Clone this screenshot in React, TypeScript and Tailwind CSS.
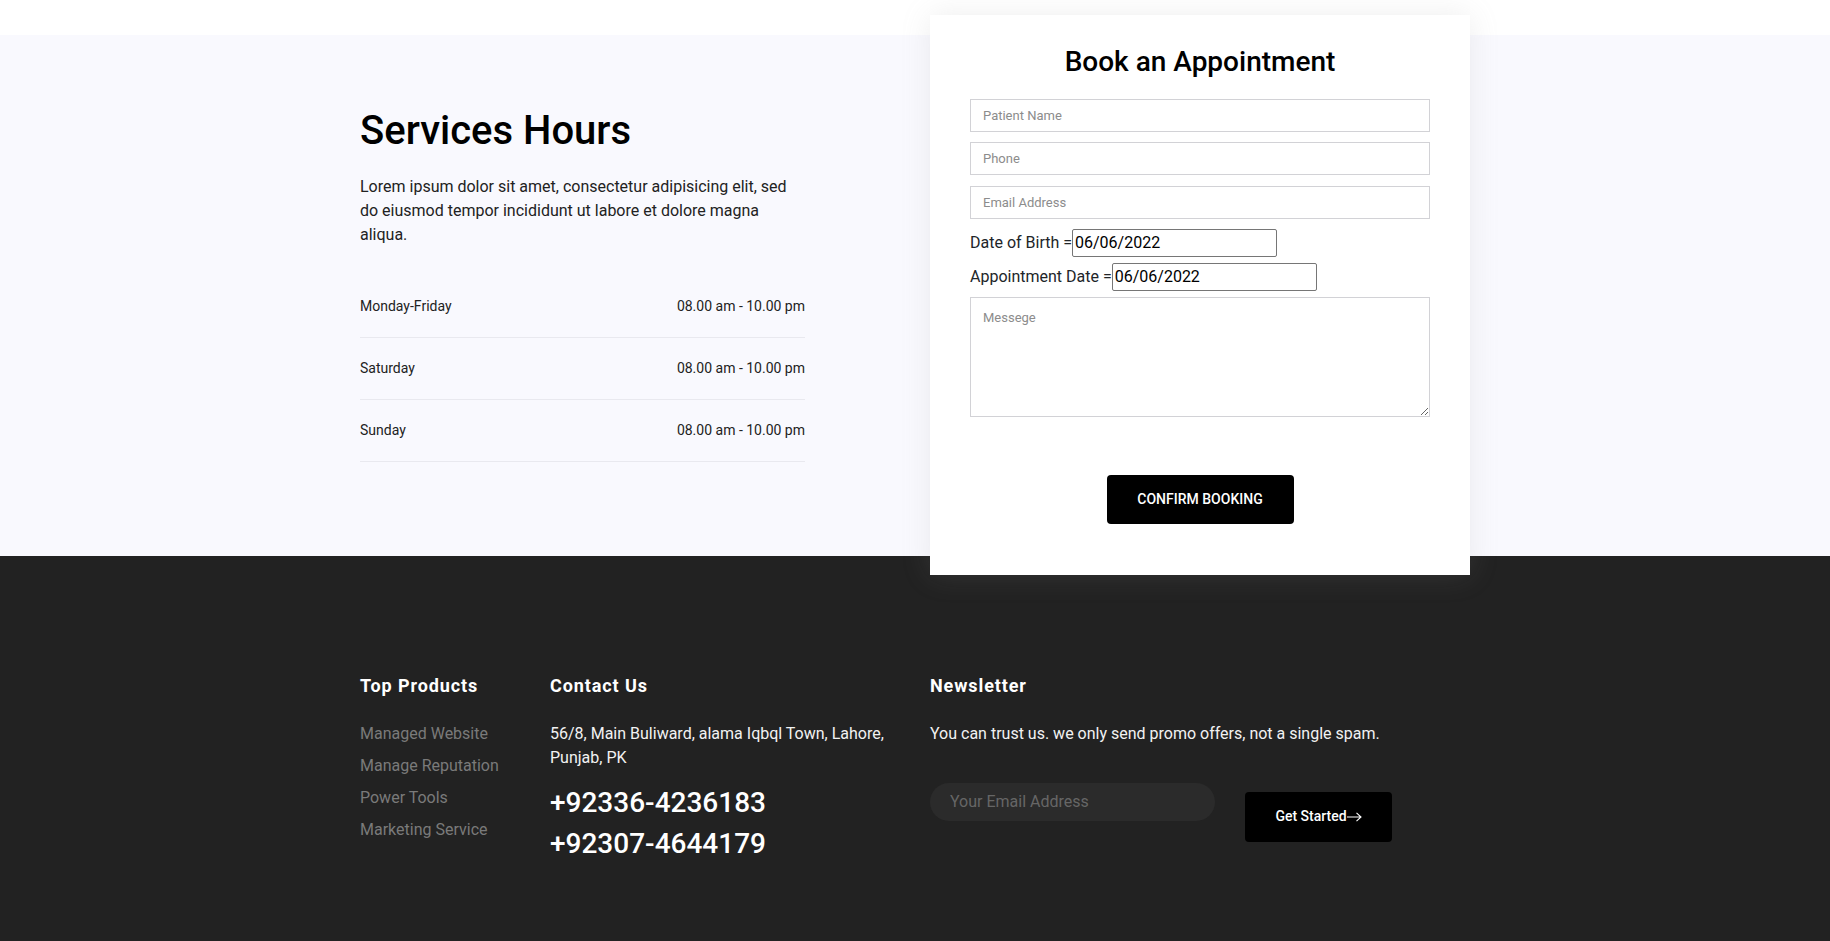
import React from 'react';

// 营业时间数据
const hours = [
  { day: 'Monday-Friday', time: '08.00 am - 10.00 pm' },
  { day: 'Saturday', time: '08.00 am - 10.00 pm' },
  { day: 'Sunday', time: '08.00 am - 10.00 pm' },
];

const products = ['Managed Website', 'Manage Reputation', 'Power Tools', 'Marketing Service'];

/**
 * 预约表单卡片
 */
const AppointmentCard: React.FC = () => {
  const fieldClass =
    'block w-full h-[33px] border border-[#d2d2d6] bg-white px-3 text-[13px] text-[#333] outline-none placeholder:text-[#8c8c8c]';

  return (
    <div className="relative z-10 -mt-5 w-[540px] h-[560px] shrink-0 bg-white px-10 pt-[30px] shadow-[0_0_28px_rgba(150,150,150,0.16)]">
      <h2 className="text-center text-[28px] leading-[1.2] font-medium text-black">
        Book an Appointment
      </h2>

      <form className="mt-5" onSubmit={(e) => e.preventDefault()}>
        <input type="text" placeholder="Patient Name" className={fieldClass} />
        <input type="text" placeholder="Phone" className={`${fieldClass} mt-[10px]`} />
        <input type="email" placeholder="Email Address" className={`${fieldClass} mt-[11px]`} />

        {/* 日期字段 */}
        <div className="mt-[10px] flex h-[28px] items-center text-[16px] text-[#212529]">
          <label>Date of Birth =</label>
          <input
            type="text"
            readOnly
            value="06/06/2022"
            className="h-[28px] w-[205px] rounded-[2px] border border-[#767676] px-[2px] text-[16px] text-black outline-none"
          />
        </div>
        <div className="mt-[6px] flex h-[28px] items-center text-[16px] text-[#212529]">
          <label>Appointment Date =</label>
          <input
            type="text"
            readOnly
            value="06/06/2022"
            className="h-[28px] w-[205px] rounded-[2px] border border-[#767676] px-[2px] text-[16px] text-black outline-none"
          />
        </div>

        <textarea
          placeholder="Messege"
          className="mt-[6px] block h-[120px] w-full border border-[#d2d2d6] bg-white px-3 pt-[10px] text-[13px] text-[#333] outline-none placeholder:text-[#8c8c8c]"
        />

        <button
          type="submit"
          className="mx-auto mt-[58px] block h-[49px] w-[187px] rounded-[4px] bg-black text-[14px] font-medium uppercase text-white"
        >
          Confirm Booking
        </button>
      </form>
    </div>
  );
};

export default function App() {
  return (
    <div className="min-h-screen bg-white pt-[35px] font-['Roboto','Liberation_Sans',sans-serif]">
      {/* 服务时间 + 预约 */}
      <section className="h-[521px] bg-[#f9f9fe]">
        <div className="mx-auto flex w-[1110px] items-start justify-between">
          <div className="w-[445px] pt-[72px]">
            <h2 className="text-[40px] leading-[1.2] font-medium text-black">Services Hours</h2>
            <p className="mt-5 text-[16px] leading-6 text-[#222]">
              Lorem ipsum dolor sit amet, consectetur adipisicing elit, sed do eiusmod tempor
              incididunt ut labore et dolore magna aliqua.
            </p>
            <ul className="mt-[29px]">
              {hours.map((h) => (
                <li
                  key={h.day}
                  className="flex h-[62px] items-center justify-between border-b border-[#e9e9ef] text-[14px] text-[#222]"
                >
                  <span>{h.day}</span>
                  <span>{h.time}</span>
                </li>
              ))}
            </ul>
          </div>

          <AppointmentCard />
        </div>
      </section>

      {/* 页脚 */}
      <footer className="h-[385px] bg-[#222222] pt-[119px]">
        <div className="mx-auto flex w-[1110px]">
          <div className="w-[190px]">
            <h4 className="text-[18px] leading-[1.2] font-bold tracking-[0.9px] text-white">
              Top Products
            </h4>
            <ul className="mt-[25px] space-y-2">
              {products.map((p) => (
                <li key={p} className="text-[16px] leading-6 text-[#7a7a7a]">
                  {p}
                </li>
              ))}
            </ul>
          </div>

          <div className="w-[380px] pr-5">
            <h4 className="text-[18px] leading-[1.2] font-bold tracking-[0.9px] text-white">
              Contact Us
            </h4>
            <p className="mt-[25px] text-[16px] leading-6 text-[#f2f2f2]">
              56/8, Main Buliward, alama Iqbql Town, Lahore, Punjab, PK
            </p>
            <div className="mt-[12px] text-[28px] leading-[41px] font-medium text-white">
              <div>+92336-4236183</div>
              <div>+92307-4644179</div>
            </div>
          </div>

          <div className="flex-1">
            <h4 className="text-[18px] leading-[1.2] font-bold tracking-[0.9px] text-white">
              Newsletter
            </h4>
            <p className="mt-[25px] text-[16px] leading-6 text-[#f2f2f2]">
              You can trust us. we only send promo offers, not a single spam.
            </p>
            <div className="mt-[37px] flex items-start gap-[30px]">
              <input
                type="email"
                placeholder="Your Email Address"
                className="h-[38px] w-[285px] rounded-full bg-[#2b2b2b] px-5 text-[16px] text-white outline-none placeholder:text-[#666]"
              />
              <button
                type="button"
                className="mt-[9px] flex h-[50px] w-[147px] items-center justify-center rounded-[4px] bg-black text-[14px] font-medium text-white"
              >
                Get Started
                <svg width="15" height="10" viewBox="0 0 15 10" fill="none" stroke="currentColor" strokeWidth="1.1">
                  <path d="M0 5h14M9.5 0.8L14 5l-4.5 4.2" />
                </svg>
              </button>
            </div>
          </div>
        </div>
      </footer>
    </div>
  );
}
